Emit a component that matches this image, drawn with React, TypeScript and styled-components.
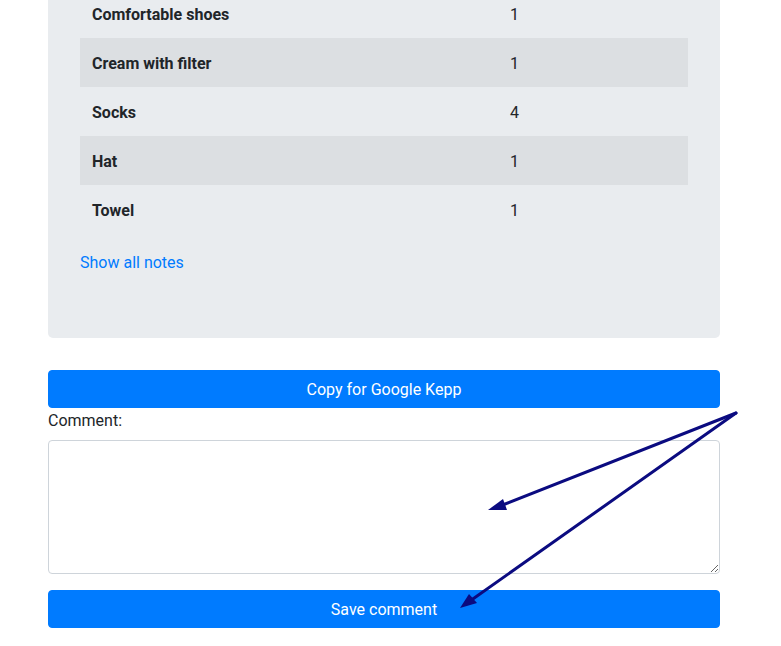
import React from "react";
import styled, { createGlobalStyle } from "styled-components";

const Global = createGlobalStyle`
  html, body { margin: 0; padding: 0; background: #fff; overflow: hidden; }
  body {
    font-family: "Segoe UI", Roboto, "Noto Sans", "Liberation Sans", sans-serif;
    font-size: 16px;
    line-height: 1.5;
    color: #212529;
  }
  * { box-sizing: border-box; }
`;

const Page = styled.div`
  position: relative;
  width: 781px;
  height: 646px;
  overflow: hidden;
`;

const Container = styled.div`
  width: 672px;
  margin-left: 48px;
  display: flex;
  flex-direction: column;
`;

const Card = styled.div`
  margin-top: -75px;
  background: #e9ecef;
  border-radius: 5px;
  padding: 64px 32px;
  margin-bottom: 32px;
`;

const Table = styled.table`
  width: 100%;
  border-collapse: collapse;
  margin-bottom: 16px;
`;

const Row = styled.tr<{ $striped?: boolean }>`
  background: ${(p) => (p.$striped ? "#dcdfe2" : "transparent")};
`;

const NameCell = styled.th`
  width: 418px;
  height: 49px;
  padding: 2px 12px 0;
  text-align: left;
  font-weight: 700;
  vertical-align: middle;
`;

const QtyCell = styled.td`
  height: 49px;
  padding: 2px 12px 0;
  vertical-align: middle;
`;

const Link = styled.a`
  color: #007bff;
  text-decoration: none;
  display: block;
  line-height: 24px;
  padding-top: 1px;
  margin-bottom: -1px;
`;

const Button = styled.button`
  width: 100%;
  height: 38px;
  border: 1px solid #007bff;
  background: #007bff;
  color: #fff;
  font-family: inherit;
  font-size: 16px;
  line-height: 24px;
  border-radius: 4px;
  padding: 7px 12px 5px;
  cursor: pointer;
`;

const Label = styled.label`
  display: block;
  line-height: 24px;
  padding-top: 1px;
  margin-bottom: 7px;
`;

const TextArea = styled.textarea`
  display: block;
  width: 100%;
  height: 134px;
  border: 1px solid #ced4da;
  border-radius: 4px;
  padding: 6px 12px;
  font-family: inherit;
  font-size: 16px;
  margin-bottom: 16px;
  resize: vertical;
`;

const Overlay = styled.svg`
  position: absolute;
  left: 0;
  top: 0;
  pointer-events: none;
`;

const items: [string, number][] = [
  ["Comfortable shoes", 1],
  ["Cream with filter", 1],
  ["Socks", 4],
  ["Hat", 1],
  ["Towel", 1],
];

export default function App() {
  return (
    <Page>
      <Global />
      <Container>
        <Card>
          <Table>
            <tbody>
              {items.map(([name, qty], i) => (
                <Row key={name} $striped={i % 2 === 1}>
                  <NameCell>{name}</NameCell>
                  <QtyCell>{qty}</QtyCell>
                </Row>
              ))}
            </tbody>
          </Table>
          <Link href="#">Show all notes</Link>
        </Card>
        <Button>Copy for Google Kepp</Button>
        <Label>Comment:</Label>
        <TextArea />
        <Button>Save comment</Button>
      </Container>
      <Overlay width="781" height="646" viewBox="0 0 781 646">
        <g stroke="#0b0b80" strokeWidth="3" strokeLinecap="round" fill="none">
          <line x1="736" y1="413" x2="500" y2="506" />
          <line x1="736" y1="413" x2="470" y2="601" />
        </g>
        <g fill="#0b0b80">
          <polygon points="488,510 503,499 507,510" />
          <polygon points="460,608 469,594 477,603" />
        </g>
      </Overlay>
    </Page>
  );
}
